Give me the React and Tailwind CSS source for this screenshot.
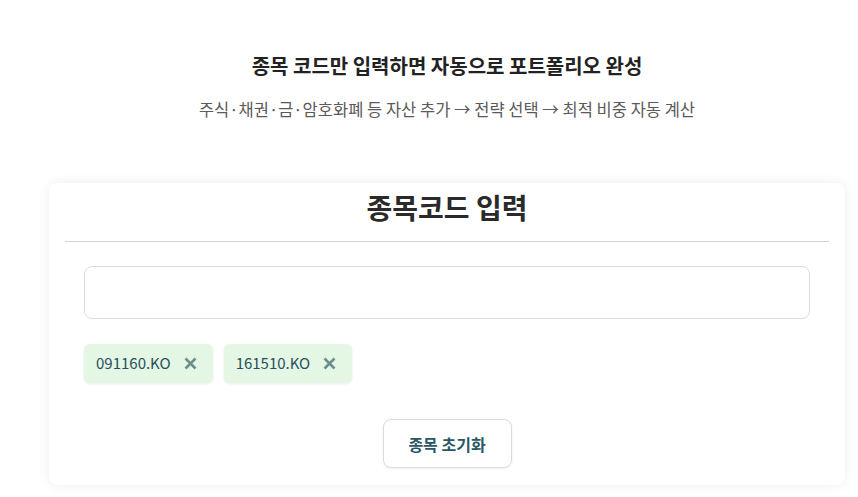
import { useState } from "react";

const FONT = { fontFamily: '"Noto Sans CJK KR", "Noto Sans", sans-serif' };

function Chip({ code, onRemove }) {
	return (
		<div className="flex h-[39px] items-center gap-[13px] rounded-md bg-[#e4f6e4] pl-3 pr-4 shadow-[0_1px_3px_rgba(0,0,0,0.08)]">
			<span className="text-[15px] text-[#27505e]">{code}</span>
			<button onClick={onRemove} className="text-[#6a8f8c]">
				<svg width="13" height="13" viewBox="0 0 13 13">
					<path d="M1.5 1.5 L11.5 11.5 M11.5 1.5 L1.5 11.5" stroke="currentColor" strokeWidth="2.6" strokeLinecap="butt" />
				</svg>
			</button>
		</div>
	);
}

export default function App() {
	const [codes, setCodes] = useState(["091160.KO", "161510.KO"]);

	return (
		<div className="min-h-screen bg-white pl-[49px] pr-[13px] pt-[52px]" style={FONT}>
			{/* Header */}
			<div className="text-center">
				<h2 className="text-[20px] font-bold leading-[28px] text-[#222]">
					종목 코드만 입력하면 자동으로 포트폴리오 완성
				</h2>
				<p className="mt-[17px] text-[16.5px] leading-[24px] text-[#5a5a5a]">
					주식·채권·금·암호화폐 등 자산 추가 → 전략 선택 → 최적 비중 자동 계산
				</p>
			</div>

			{/* Card */}
			<div className="mt-[62px] rounded-lg bg-white px-4 pb-[17px] shadow-[0_0_12px_rgba(0,0,0,0.07)]">
				<h1 className="pt-[1px] pb-[3px] text-center text-[28px] font-bold leading-[46px] text-[#2a2a2a]">
					종목코드 입력
				</h1>
				<div className="mt-[8px] border-t border-[#d4d4d4]" />

				<div className="px-[19px] pt-6">
					<input
						type="text"
						className="h-[53px] w-full rounded-lg border border-[#dcdcdc] px-4 text-[15px] outline-none"
					/>

					<div className="mt-[25px] flex gap-[11px]">
						{codes.map((code) => (
							<Chip key={code} code={code} onRemove={() => setCodes(codes.filter((c) => c !== code))} />
						))}
					</div>

					<div className="mt-[36px] flex justify-center">
						<button
							onClick={() => setCodes([])}
							className="h-[49px] w-[129px] rounded-lg border border-[#dcdcdc] bg-white text-[16px] font-bold text-[#2a5766] shadow-[0_1px_3px_rgba(0,0,0,0.06)]"
						>
							종목 초기화
						</button>
					</div>
				</div>
			</div>
		</div>
	);
}
